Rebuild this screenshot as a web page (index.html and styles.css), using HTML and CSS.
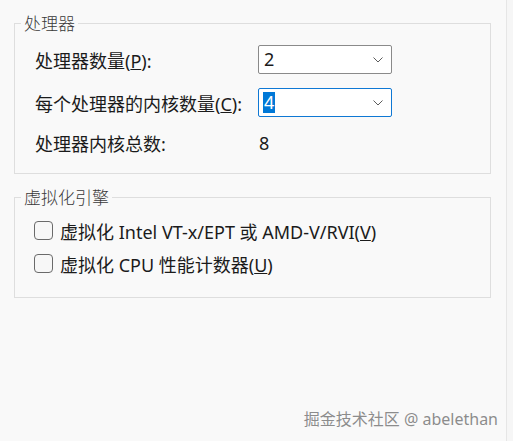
FILE: index.html
```html
<!DOCTYPE html>
<html lang="zh-CN">
<head>
    <meta charset="UTF-8">
    <meta name="viewport" content="width=device-width, initial-scale=1.0">
    <title>处理器</title>
    <link rel="stylesheet" href="styles.css">
</head>
<body>
    <div class="panel">
        <fieldset class="group">
            <legend>处理器</legend>
            <div class="form-grid">
                <label class="field-label" for="cpus">处理器数量(<u>P</u>):</label>
                <div class="select" id="cpus">
                    <span class="select-value">2</span>
                    <svg class="chevron" width="10" height="6" viewBox="0 0 10 6"><polyline points="0.5,0.5 5,5 9.5,0.5" fill="none" stroke="#5c5c5c" stroke-width="1"/></svg>
                </div>

                <label class="field-label" for="cores">每个处理器的内核数量(<u>C</u>):</label>
                <div class="select focused" id="cores">
                    <span class="select-value selected">4</span>
                    <svg class="chevron" width="10" height="6" viewBox="0 0 10 6"><polyline points="0.5,0.5 5,5 9.5,0.5" fill="none" stroke="#5c5c5c" stroke-width="1"/></svg>
                </div>

                <span class="field-label">处理器内核总数:</span>
                <span class="total">8</span>
            </div>
        </fieldset>

        <fieldset class="group engine">
            <legend>虚拟化引擎</legend>
            <label class="check-row">
                <span class="checkbox"></span>
                <span>虚拟化 Intel VT-x/EPT 或 AMD-V/RVI(<u>V</u>)</span>
            </label>
            <label class="check-row">
                <span class="checkbox"></span>
                <span>虚拟化 CPU 性能计数器(<u>U</u>)</span>
            </label>
        </fieldset>

        <div class="watermark">掘金技术社区 @ abelethan</div>
    </div>
    <div class="side"></div>
</body>
</html>
```

FILE: styles.css
```css
body {
    margin: 0;
    display: flex;
    height: 441px;
    overflow: hidden;
    background-color: #f9f9f9;
    font-family: 'Noto Sans', 'Noto Sans CJK SC', sans-serif;
    font-size: 18px;
    color: #1b1b1b;
}
.panel {
    position: relative;
    flex: 0 0 507px;
    box-sizing: border-box;
    padding-top: 11px;
    border-right: 1px solid #e6e6e6;
}
.side {
    flex: 1;
    background: #f6f6f6;
}
.group {
    box-sizing: border-box;
    width: 477px;
    margin: 0 0 0 14px;
    padding: 10px 6px 18px;
    border: 1px solid #dedede;
}
.group legend {
    padding: 0 3px;
    font-size: 17px;
    line-height: 24px;
    color: #3a3a3a;
    font-family: 'Noto Sans CJK SC', sans-serif;
    font-weight: 300;
}
.form-grid {
    display: grid;
    grid-template-columns: 223px 134px;
    grid-template-rows: 29px 29px 24px;
    row-gap: 14px;
    align-items: center;
    padding-left: 14px;
}
.field-label {
    white-space: nowrap;
}
.select {
    box-sizing: border-box;
    height: 29px;
    display: flex;
    align-items: center;
    justify-content: space-between;
    padding: 0 8px 0 4px;
    background: #ffffff;
    border: 1px solid #8a8a8a;
    border-radius: 2px;
}
.select.focused {
    border-color: #0f78d4;
}
.select-value {
    padding: 0 1px;
    line-height: 21px;
}
.select-value.selected {
    background: #0078d7;
    color: #ffffff;
}
.total {
    padding-left: 1px;
}
.engine {
    margin-top: 11px;
    padding: 5px 6px 17px;
}
.check-row {
    display: flex;
    align-items: center;
    gap: 7px;
    height: 33px;
    padding-left: 13px;
    white-space: nowrap;
}
.checkbox {
    box-sizing: border-box;
    width: 19px;
    height: 19px;
    border: 1px solid #6a6a6a;
    border-radius: 4px;
    background: #f7f7f7;
}
.watermark {
    position: absolute;
    right: 8px;
    bottom: 11px;
    font-size: 16px;
    color: #8c8c8c;
    text-shadow: 0 0 1px #ffffff;
}
```
